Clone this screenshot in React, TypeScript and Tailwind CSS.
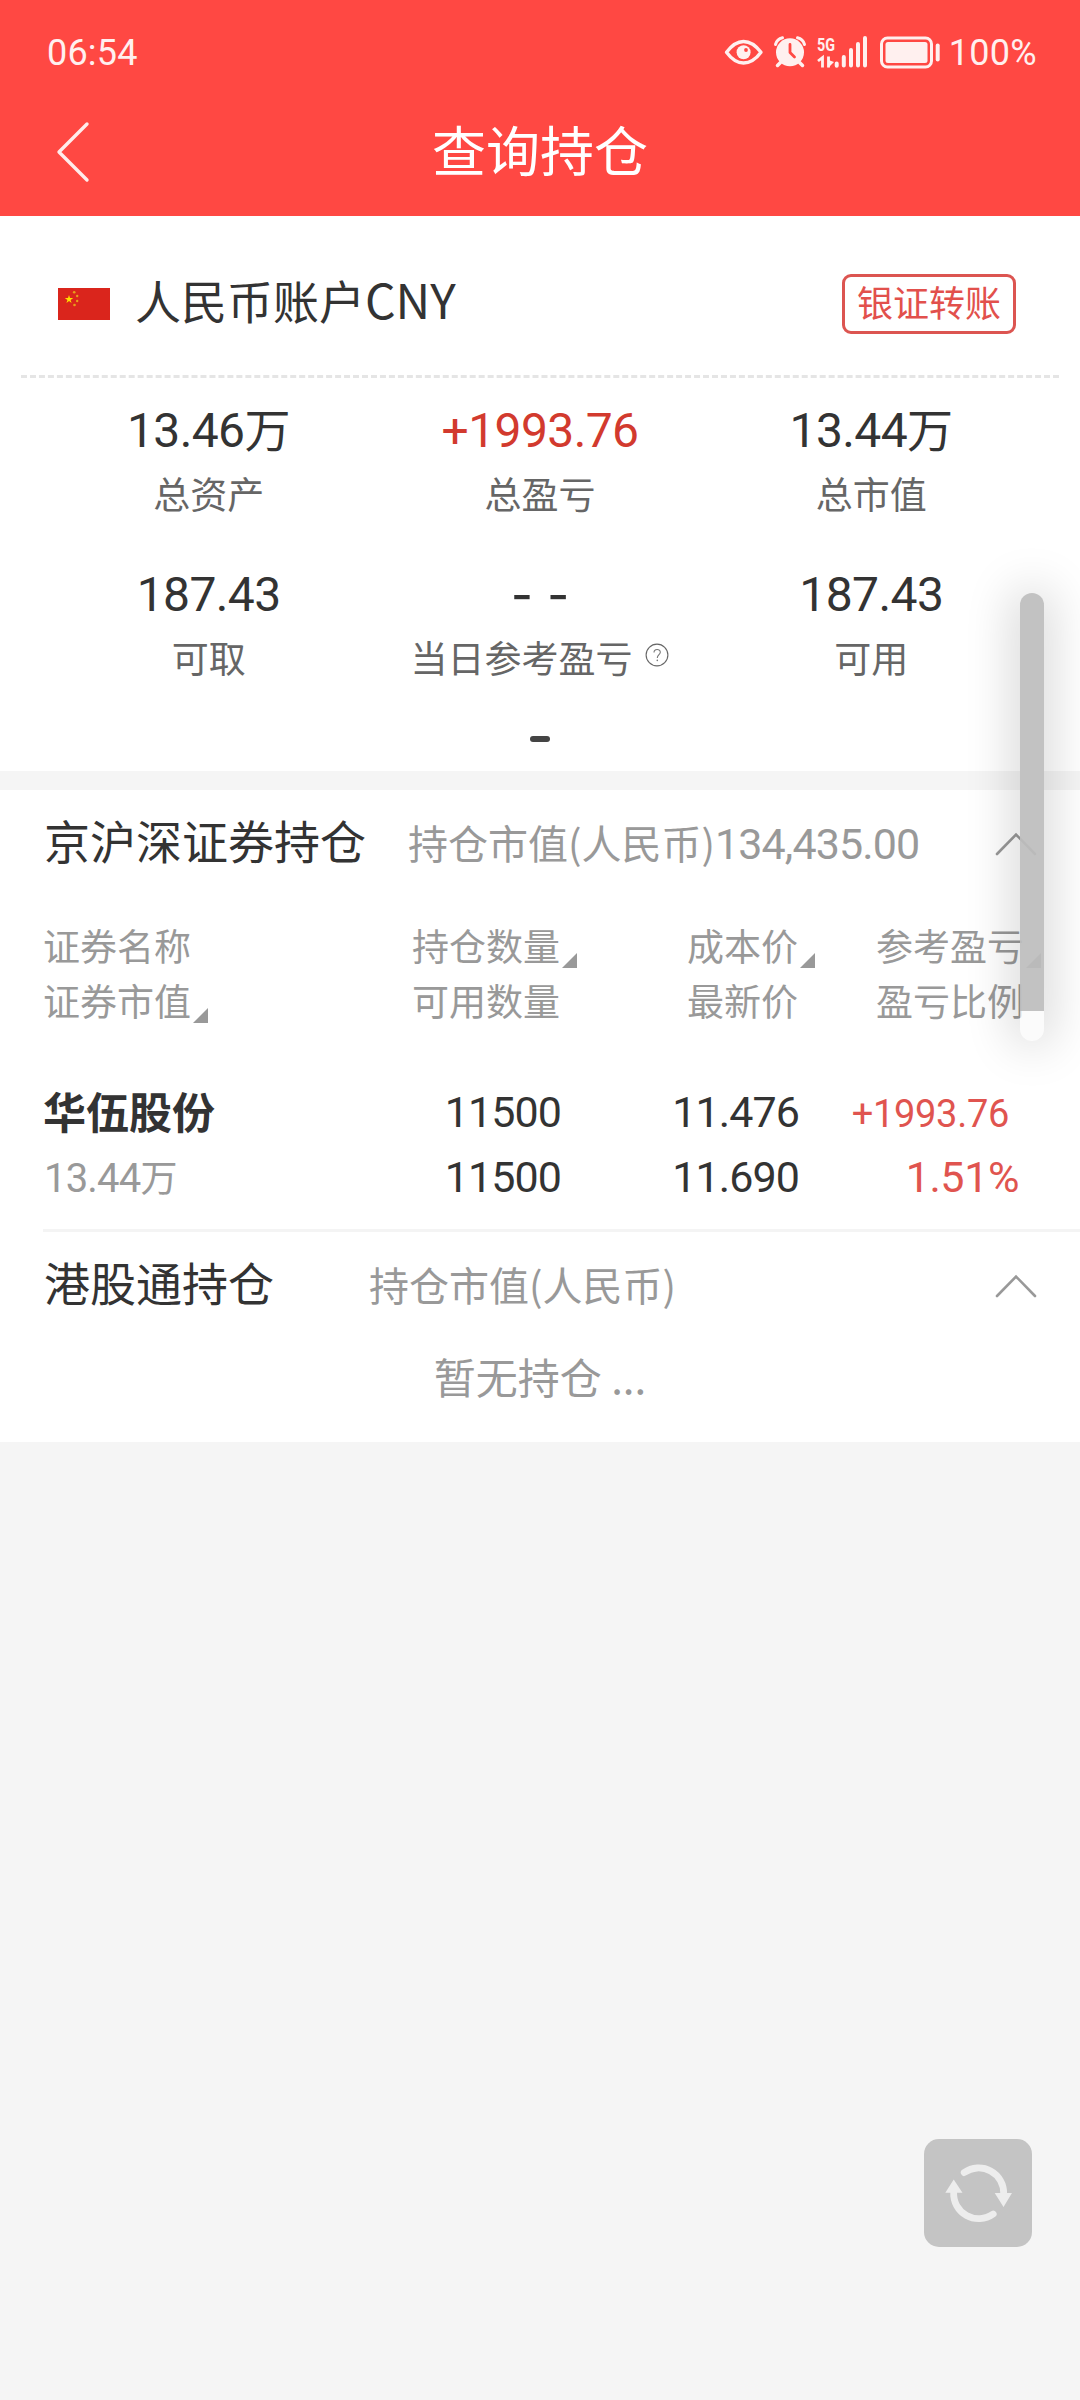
import type { ReactNode } from 'react';

const SUMMARY = [
  { value: '13.46', unit: '万', label: '总资产' },
  { value: '+1993.76', label: '总盈亏', up: true },
  { value: '13.44', unit: '万', label: '总市值' },
  { value: '187.43', label: '可取' },
  { value: '', label: '当日参考盈亏', help: true },
  { value: '187.43', label: '可用' },
];

const COLUMNS = [
  { top: '证券名称', bottom: '证券市值', sort: 'bottom' },
  { top: '持仓数量', bottom: '可用数量', sort: 'top' },
  { top: '成本价', bottom: '最新价', sort: 'top' },
  { top: '参考盈亏', bottom: '盈亏比例', sort: 'top' },
];

function StatusIcons() {
  return (
    <svg className="w-[216px] h-[34px] overflow-visible" viewBox="724 35 216 34" fill="none">
      {/* Eye */}
      <path d="M726.5 52.3C732 45 737.5 41.5 743.5 41.5S755.5 45 761 52.3C755.5 59.8 749.5 63 743.5 63S732 59.8 726.5 52.3Z" stroke="#fff0ef" strokeWidth="3.4" strokeLinejoin="round" />
      <circle cx="743.6" cy="52.3" r="7" fill="#fff0ef" />
      <circle cx="746" cy="50" r="1.9" fill="#ff4843" />
      {/* Alarm */}
      <circle cx="790" cy="52.3" r="14" fill="#fff0ef" />
      <path d="M775.5 44.5Q777 39 782.5 37.8M797.5 37.8Q803 39 804.5 44.5" stroke="#fff0ef" strokeWidth="3" strokeLinecap="round" />
      <path d="M780.5 62.5L777.5 65.5M799.5 62.5L802.5 65.5" stroke="#fff0ef" strokeWidth="3.5" strokeLinecap="round" />
      <path d="M790 44.5V52.5L794.5 57" stroke="#ff4843" strokeWidth="2.8" strokeLinecap="round" strokeLinejoin="round" />
      {/* Signal */}
      <text x="817" y="50.5" fill="#fff0ef" fontFamily="Roboto, sans-serif" fontSize="19" fontWeight="700" textLength="18" lengthAdjust="spacingAndGlyphs">5G</text>
      <path d="M818 61L822.5 57.5V67.500M828.500 56.500V67.500" stroke="#fff0ef" strokeWidth="2.8" />
      <path d="M828.500 67.500V60L834 62Z" fill="#fff0ef" />
      <path d="M836.7 63.5V65.8M843.8 57V65.5M851 50V65.5M858 44V65.5M865 38V65.5" stroke="#fff0ef" strokeWidth="4" strokeLinecap="round" />
      {/* Battery */}
      <rect x="881.5" y="38" width="50" height="29" rx="6" stroke="#fff0ef" strokeWidth="3" />
      <rect x="885.5" y="42" width="42" height="21" rx="2.5" fill="#fff0ef" />
      <rect x="935.7" y="43.5" width="4" height="18" rx="2" fill="#fff0ef" />
    </svg>
  );
}

function Flag() {
  return (
    <svg className="w-[52px] h-8" viewBox="0 0 52 32">
      <rect width="52" height="32" fill="#da251c" />
      <path d="M11 7l1 3h3.2l-2.6 1.9 1 3.1-2.6-1.9-2.6 1.9 1-3.1L6.8 10H10z" fill="#ffde00" />
      <g fill="#e8a01a">
        <circle cx="16.2" cy="4.2" r="1.3" />
        <circle cx="19.2" cy="8" r="1.2" />
        <circle cx="19.2" cy="13" r="1.2" />
        <circle cx="16.5" cy="17" r="1.3" />
      </g>
    </svg>
  );
}

function ChevronUp() {
  return (
    <svg className="w-[42px] h-6 ml-auto mr-[43px]" viewBox="0 0 42 24" fill="none">
      <path d="M2 22L21 2.5 40 22" stroke="#999" strokeWidth="2.6" strokeLinecap="round" />
    </svg>
  );
}

function SortMark() {
  return (
    <svg className="absolute left-full bottom-[5px] ml-[2px] w-[15px] h-[15px]" viewBox="0 0 15 15">
      <path d="M15 0V15H0Z" fill="#999" />
    </svg>
  );
}

function Num({ children }: { children: ReactNode }) {
  return <span className="font-[Roboto] text-[43px] leading-none tracking-[-0.9px]">{children}</span>;
}

export default function App() {
  return (
    <div className="relative w-[1080px] min-h-[2400px] bg-[#f5f5f5] text-[#333] font-['Noto_Sans_CJK_SC',sans-serif] whitespace-nowrap">
      <header className="h-[216px] bg-[#ff4843] text-white">
        <div className="flex items-center h-[104px] pl-[47px] pr-[43px] text-[#fff0ef] font-[Roboto] text-[36px] leading-none">
          <span className="flex-1 pt-px tracking-[0.2px]">06:54</span>
          <StatusIcons />
          <span className="ml-[9px] pt-px tracking-[0.3px]">100%</span>
        </div>
        <div className="grid grid-cols-3 items-center h-[86px]">
          <svg className="ml-[55px] mt-[7px] w-9 h-[62px]" viewBox="0 0 36 62" fill="none">
            <path d="M32 3L4 31 32 59" stroke="#ffeceb" strokeWidth="3.4" strokeLinecap="round" strokeLinejoin="round" />
          </svg>
          <h1 className="pt-[2px] text-center text-[54px] leading-[86px]">查询持仓</h1>
        </div>
      </header>

      <section className="bg-white">
        <div className="flex items-center h-[159px] pt-[17px] pl-[58px] pr-16">
          <Flag />
          <span className="ml-[25px] mb-[10px] text-[46px] leading-[60px]">
            人民币账户<span className="text-[48px] leading-none">CNY</span>
          </span>
          <button className="ml-auto w-[174px] h-[60px] pb-[5px] rounded-[9px] border-3 border-[#dc5551] text-[#e2504c] text-[36px] leading-[49px]">
            银证转账
          </button>
        </div>
        <div className="mx-[21px] border-t-3 border-dashed border-[#e5e5e5]" />

        <div className="grid grid-cols-3 gap-y-[43px] px-[43px] pt-[19px] text-center">
          {SUMMARY.map((item) => (
            <div key={item.label}>
              <div className={`h-[60px] text-[46px] leading-[60px] ${item.up ? 'text-[#d23a2e]' : ''}`}>
                {item.value ? (
                  <span className="font-[Roboto] text-[48px] leading-none tracking-[-0.6px]">{item.value}</span>
                ) : (
                  <span className="block text-[60px] leading-[54px] [word-spacing:2px]">- -</span>
                )}
                {item.unit}
              </div>
              <div className="mt-[11px] flex items-center justify-center text-[37px] leading-[50px] text-[#666]">
                {item.label}
                {item.help && (
                  <svg className="ml-[13px] mb-1 w-6 h-6" viewBox="0 0 24 24" fill="none">
                    <circle cx="12" cy="12" r="10.9" stroke="#666" strokeWidth="1.1" />
                    <path d="M9 9.5C9 5.500 15.3 5.5 15.3 9.3C15.3 11.5 12.3 12 12.3 15" stroke="#777" strokeWidth="1.1" />
                    <circle cx="12.3" cy="17.4" r=".8" fill="#777" />
                  </svg>
                )}
              </div>
            </div>
          ))}
        </div>
        <div className="flex justify-center pt-[54px] pb-[29px]">
          <div className="w-5 h-[6px] rounded-full bg-[#444]" />
        </div>
      </section>

      <section className="mt-[19px] bg-white">
        <div className="flex items-center h-[98px] pl-[44px]">
          <div className="flex items-baseline gap-[42px]">
            <h2 className="text-[46px] leading-[98px]">京沪深证券持仓</h2>
            <span className="text-[40px] text-[#999]">
              持仓市值(人民币)<Num>134,435.00</Num>
            </span>
          </div>
          <div className="flex flex-1 pt-[9px]">
            <ChevronUp />
          </div>
        </div>

        <div className="grid grid-cols-[300px_217px_238px_226px] pl-[43px] pt-[30px] text-[37px] leading-[55px] text-[#999]">
          {COLUMNS.map((col, i) => (
            <div key={col.top} className={i === 0 ? 'text-left' : 'text-right'}>
              <div>
                <span className="relative inline-block">
                  {col.top}
                  {col.sort === 'top' && <SortMark />}
                </span>
              </div>
              <div>
                <span className="relative inline-block">
                  {col.bottom}
                  {col.sort === 'bottom' && <SortMark />}
                </span>
              </div>
            </div>
          ))}
        </div>

        <div className="grid grid-cols-[300px_217px_238px_226px] pl-[44px] pt-[48px] pb-[23px] text-[43px] leading-[65px] text-right">
          <div className="h-[130px] pt-[2px] text-left">
            <div className="-ml-px font-bold">华伍股份</div>
            <div className="pt-px text-[37px] text-[#999]">
              <span className="font-[Roboto] text-[40px] leading-none tracking-[-0.8px]">13.44</span>万
            </div>
          </div>
          <div>
            <div><Num>11500</Num></div>
            <div><Num>11500</Num></div>
          </div>
          <div>
            <div><Num>11.476</Num></div>
            <div><Num>11.690</Num></div>
          </div>
          <div className="text-[#e0544f]">
            <div className="pr-[16px]">
              <span className="font-[Roboto] text-[38px] leading-none tracking-[-0.3px]">+1993.76</span>
            </div>
            <div className="pr-[6px]">
              <span className="font-[Roboto] text-[43px] leading-none tracking-[-0.4px]">1.51%</span>
            </div>
          </div>
        </div>
        <div className="ml-[43px] h-[3px] bg-[#f4f4f4]" />

        <div className="flex items-center h-[98px] pl-[44px]">
          <div className="flex items-baseline gap-[95px]">
            <h2 className="text-[46px] leading-[98px]">港股通持仓</h2>
            <span className="text-[40px] text-[#999]">持仓市值(人民币)</span>
          </div>
          <div className="flex flex-1 pt-[9px]">
            <ChevronUp />
          </div>
        </div>
        <div className="pt-[16px] pb-[36px] text-center text-[42px] leading-[60px] text-[#999]">暂无持仓 ...</div>
      </section>

      {/* Scroll indicator */}
      <div className="absolute left-[1020px] top-[593px] w-6 h-[448px] rounded-full overflow-hidden bg-[#f9f9f9]/60">
        <div className="h-[418px] bg-[#b4b4b4]/80" />
      </div>
      <div className="absolute left-[1020px] top-[593px] w-6 h-[448px] rounded-full shadow-[0_0_48px_6px_rgba(0,0,0,0.18)]" />

      {/* Refresh */}
      <button className="absolute left-[924px] top-[2139px] w-[108px] h-[108px] rounded-[15px] bg-[#c4c4c4]">
        <svg className="w-[108px] h-[108px]" viewBox="0 0 108 108" fill="none">
          <path d="M40.2 33.6A25 25 0 0 1 79.7 55M69.2 75A25 25 0 0 1 29.7 53" stroke="#ededed" strokeWidth="6.8" strokeLinecap="round" />
          <path d="M70.7 54H88L79.5 68ZM21.3 53.8H38.5L29.7 40.5Z" fill="#ededed" />
        </svg>
      </button>
    </div>
  );
}
